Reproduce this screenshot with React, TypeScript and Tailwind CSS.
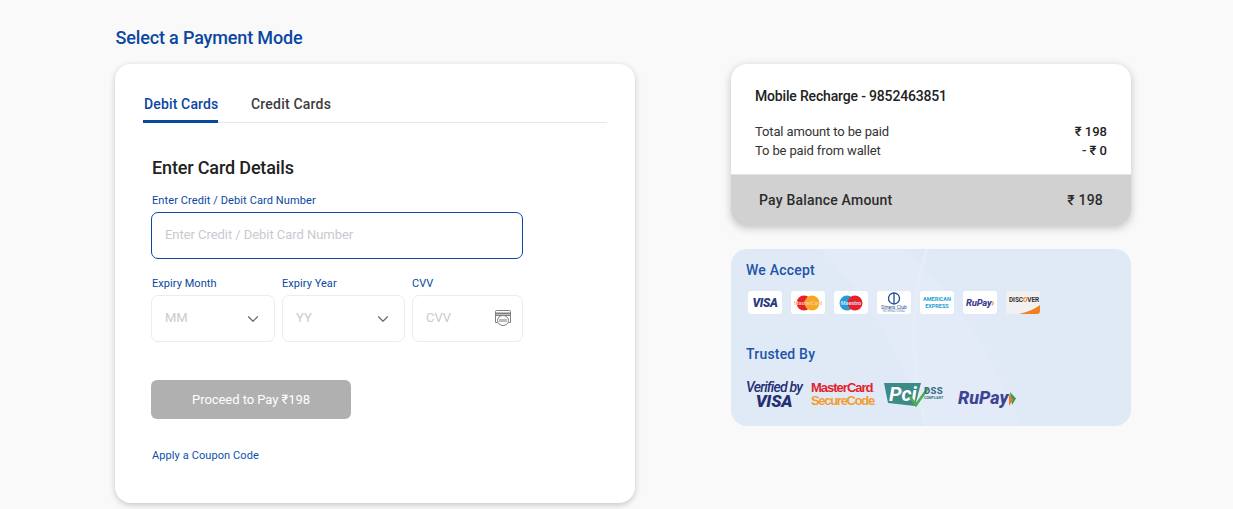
import React from 'react';
import { ChevronDown } from 'lucide-react';

function CardTile({ children, className = 'bg-white' }: { children: React.ReactNode; className?: string }) {
  return (
    <div className={`w-[34px] h-[23px] rounded-[3px] overflow-hidden flex items-center justify-center shrink-0 ${className}`}>
      {children}
    </div>
  );
}

function CircleLogo({ left, right, label, labelColor }: { left: string; right: string; label: string; labelColor: string }) {
  return (
    <svg width="28" height="16" viewBox="0 0 28 16">
      <circle cx="10" cy="8" r="7.5" fill={left} />
      <circle cx="18" cy="8" r="7.5" fill={right} />
      <text x="14" y="10" textAnchor="middle" fontSize="5.5" fontWeight="700" fontFamily="Roboto, sans-serif" fill={labelColor}>{label}</text>
    </svg>
  );
}

function CvvIcon() {
  return (
    <svg width="18" height="18" viewBox="0 0 18 18" fill="none" stroke="#7f7f7f" strokeWidth="1">
      <path d="M3.5 13.5H1.5V2.5c0-.6.4-1 1-1h13c.6 0 1 .4 1 1v11h-2" />
      <path d="M1.5 4.5h15" strokeWidth="2" />
      <path d="M1.5 6.5h15" />
      <ellipse cx="9" cy="11.5" rx="5.5" ry="5" fill="#fff" />
      <rect x="5" y="10" width="8" height="3" fill="#bbb" stroke="none" />
    </svg>
  );
}

function AcceptedCards() {
  return (
    <div className="flex mt-[12px] ml-[2px] gap-[9px]">
      <CardTile>
        <span className="text-[12px] font-black italic text-[#2b3a80] leading-none tracking-[-0.4px]">VISA</span>
      </CardTile>
      <CardTile>
        <CircleLogo left="#e8202a" right="#f7a823" label="MasterCard" labelColor="#f6c9a0" />
      </CardTile>
      <CardTile>
        <CircleLogo left="#2a9ad6" right="#e8202a" label="Maestro" labelColor="#cfe2f2" />
      </CardTile>
      <CardTile>
        <svg width="32" height="21" viewBox="0 0 32 21">
          <circle cx="16" cy="6.5" r="5.5" fill="none" stroke="#1b4a8f" strokeWidth="1.3" />
          <path d="M16 1.5v10" stroke="#1b4a8f" strokeWidth="1.3" />
          <text x="16" y="16.5" textAnchor="middle" fontSize="5" fontFamily="Roboto, sans-serif" fill="#1b4a8f">Diners Club</text>
          <text x="16" y="20" textAnchor="middle" fontSize="3" fontFamily="Roboto, sans-serif" fill="#6f8fb8">INTERNATIONAL</text>
        </svg>
      </CardTile>
      <CardTile>
        <div className="flex flex-col items-center text-[5.5px] leading-[7px] font-bold text-[#1c9fd8]">
          <span>AMERICAN</span>
          <span>EXPRESS</span>
        </div>
      </CardTile>
      <CardTile>
        <span className="text-[9.5px] font-extrabold italic text-[#3c3f8f] leading-none whitespace-nowrap tracking-[-0.2px]">
          RuPay<span className="text-[#e8792b]">›</span>
        </span>
      </CardTile>
      <CardTile className="bg-[#f1f1f1] relative">
        <span className="absolute top-[5px] left-[3px] text-[6.5px] font-bold text-[#333] leading-[8px] tracking-[-0.1px]">
          DISC<span className="text-[#f08020]">O</span>VER
        </span>
        <svg className="absolute inset-0" width="34" height="23" viewBox="0 0 34 23">
          <path d="M13 23C22 21 29 18 34 14V23Z" fill="#f08020" />
        </svg>
      </CardTile>
    </div>
  );
}

function TrustedLogos() {
  return (
    <div className="flex items-center mt-[16px] h-[30px]">
      <div className="w-[56px] flex flex-col items-center italic text-[#262f74]">
        <span className="text-[14px] leading-[14px] font-medium tracking-[-0.8px] whitespace-nowrap">Verified by</span>
        <span className="text-[17px] leading-[15px] font-black tracking-[-0.2px]">VISA</span>
      </div>
      <div className="w-[64px] ml-[9px] flex flex-col font-['Liberation_Sans',sans-serif] font-bold leading-none text-[13px]">
        <span className="text-[#e3222c] whitespace-nowrap tracking-[-1px]">MasterCard<span className="text-[6px]">.</span></span>
        <span className="text-[#f49c30] whitespace-nowrap tracking-[-1.3px]">SecureCode<span className="text-[6px]">.</span></span>
      </div>
      <svg className="ml-[8px] mt-[2px]" width="64" height="26" viewBox="0 0 64 26">
        <path d="M1 1H38L32 24L5 21Z" fill="#3b8c86" />
        <text x="6" y="19" fontSize="20" fontWeight="700" fontStyle="italic" fontFamily="Roboto, sans-serif" fill="#fff">Pci</text>
        <path d="M27 15L33 23L45 6" fill="none" stroke="#4cae4f" strokeWidth="2.6" />
        <text x="41" y="12" fontSize="9.5" fontWeight="800" fontFamily="Roboto, sans-serif" fill="#3b6f80" letterSpacing="0.3">DSS</text>
        <text x="41" y="16.5" fontSize="3.4" fontWeight="700" fontFamily="Roboto, sans-serif" fill="#3b6f80">COMPLIANT</text>
      </svg>
      <div className="ml-[11px] flex items-center mt-[8px]">
        <span className="text-[18px] font-extrabold italic text-[#3f4393] leading-none tracking-[0px]">RuPay</span>
        <svg width="9" height="15" viewBox="0 0 9 15">
          <path d="M2 1L8 7.5L4 14Z" fill="#3d9a4a" />
          <path d="M1 3L5 8.5L1 15Z" fill="#ea7a24" />
        </svg>
      </div>
    </div>
  );
}

export default function App() {
  return (
    <div className="h-[509px] overflow-hidden bg-[#f9f9f9] font-['Roboto',sans-serif] flex pl-[115px]">
      {/* Left: payment form */}
      <div className="w-[520px] shrink-0">
        <h1 className="mt-[26px] pl-[0.5px] text-[18px] leading-[24px] font-medium text-[#0a47a1] tracking-[-0.15px]">Select a Payment Mode</h1>
        <div className="mt-[14px] h-[439px] bg-white rounded-[16px] shadow-[0_2px_6px_rgba(0,0,0,0.2)] pt-[28px] px-[28px]">
          <div className="flex border-b border-[#e6e6e6] h-[31px] gap-[33px]">
            <div className="w-[75px] h-[31px] border-b-[3px] border-[#0a47a1] text-[14px] leading-[24px] font-medium text-[#0a47a1] tracking-[0.15px] pl-px whitespace-nowrap">Debit Cards</div>
            <div className="text-[14px] leading-[24px] font-medium text-[#3c3c3c] tracking-[0.2px]">Credit Cards</div>
          </div>
          <div className="pl-[8px] w-[380px]">
            <h2 className="mt-[32px] pl-px text-[18px] leading-[26px] font-medium text-[#222] tracking-[-0.15px]">Enter Card Details</h2>
            <label className="block mt-[13px] pl-px text-[11px] leading-[14px] text-[#0a47a1] tracking-[0.1px]">Enter Credit / Debit Card Number</label>
            <div className="mt-[4px] h-[47px] border border-[#0a47a1] rounded-[7px] pl-[13px] pb-[2px] flex items-center text-[13px] text-[#c9c9d0] tracking-[-0.05px]">
              Enter Credit / Debit Card Number
            </div>
            <div className="flex mt-[18px] gap-[7px]">
              <div className="w-[124px]">
                <label className="block pl-px text-[11px] leading-[14px] text-[#0a47a1] tracking-[0.05px]">Expiry Month</label>
                <div className="mt-[4px] h-[47px] border border-[#ebebf3] rounded-[7px] pl-[13px] pr-[12px] pb-[2px] flex items-center justify-between text-[13px] text-[#c9c9d0]">
                  MM
                  <ChevronDown size={18} strokeWidth={1.5} className="text-[#666] mt-[3px]" />
                </div>
              </div>
              <div className="w-[123px]">
                <label className="block text-[11px] leading-[14px] text-[#0a47a1] tracking-[0.05px]">Expiry Year</label>
                <div className="mt-[4px] h-[47px] border border-[#ebebf3] rounded-[7px] pl-[13px] pr-[12px] pb-[2px] flex items-center justify-between text-[13px] text-[#c9c9d0]">
                  YY
                  <ChevronDown size={18} strokeWidth={1.5} className="text-[#666] mt-[3px]" />
                </div>
              </div>
              <div className="w-[111px]">
                <label className="block text-[11px] leading-[14px] text-[#0a47a1]">CVV</label>
                <div className="mt-[4px] h-[47px] border border-[#ebebf3] rounded-[7px] pl-[13px] pr-[10px] pb-[2px] flex items-center justify-between text-[13px] text-[#c9c9d0]">
                  CVV
                  <CvvIcon />
                </div>
              </div>
            </div>
            <button className="mt-[38px] w-[200px] h-[39px] rounded-[6px] bg-[#b0b0b0] text-white text-[13px] font-normal tracking-[-0.05px]">Proceed to Pay ₹198</button>
            <div className="mt-[30px] pl-px text-[11px] leading-[14px] text-[#0a52a8] tracking-[0.1px]">Apply a Coupon Code</div>
          </div>
        </div>
      </div>

      {/* Right: summary */}
      <div className="w-[400px] shrink-0 ml-[96px] pt-[64px]">
        <div className="h-[162px] bg-white rounded-[16px] overflow-hidden shadow-[0_2px_8px_rgba(0,0,0,0.22)] flex flex-col">
          <div className="flex-1 px-[24px] pt-[23px]">
            <div className="text-[14px] leading-[18px] font-medium text-[#222] tracking-[-0.17px]">Mobile Recharge - 9852463851</div>
            <div className="mt-[17px] flex justify-between text-[13px] leading-[19px] text-[#333]">
              <span className="tracking-[-0.13px]">Total amount to be paid</span>
              <span className="font-medium text-[#222]">₹ 198</span>
            </div>
            <div className="flex justify-between text-[13px] leading-[19px] text-[#333]">
              <span className="tracking-[-0.13px]">To be paid from wallet</span>
              <span className="font-medium text-[#222]">- ₹ 0</span>
            </div>
          </div>
          <div className="h-[52px] bg-[#d1d1d1] border-t border-[#e4e4e4] pl-[28px] pr-[28px] flex items-center justify-between text-[14px] font-medium text-[#2c2c2c] tracking-[0.2px]">
            <span>Pay Balance Amount</span>
            <span>₹ 198</span>
          </div>
        </div>

        <div className="relative mt-[23px] h-[177px] bg-[#e0eaf6] rounded-[16px] overflow-hidden pl-[15px] pt-[12px]">
          <svg className="absolute inset-0" width="400" height="177" viewBox="0 0 400 177">
            <path d="M90 0C130 40 170 100 195 177H290C260 100 220 40 170 0Z" fill="#e2ebf7" />
            <path d="M196 0C180 50 178 110 195 177" fill="none" stroke="#e4edf8" strokeWidth="3" />
          </svg>
          <div className="relative">
            <div className="text-[14px] leading-[18px] font-medium text-[#1f55a8] tracking-[0.2px]">We Accept</div>
            <AcceptedCards />
            <div className="mt-[31px] text-[14px] leading-[18px] font-medium text-[#1f55a8] tracking-[0.2px]">Trusted By</div>
            <TrustedLogos />
          </div>
        </div>
      </div>
    </div>
  );
}
